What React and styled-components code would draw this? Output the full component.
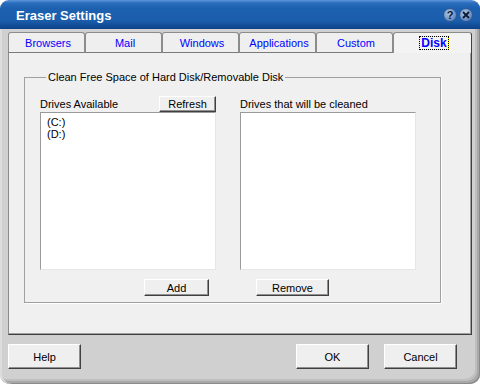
import React from "react";
import styled, { createGlobalStyle } from "styled-components";

const GlobalStyle = createGlobalStyle`
  html, body {
    margin: 0;
    padding: 0;
    background: #ffffff;
  }
  body {
    font-family: "Liberation Sans", Arial, sans-serif;
    font-size: 11px;
    color: #000;
  }
`;

const tabs = ["Browsers", "Mail", "Windows", "Applications", "Custom", "Disk"];

const App = () => {
  return (
    <>
      <GlobalStyle />
      <Window>
        <TitleBar>
          <Title>Eraser Settings</Title>
          <CaptionButtons>
            <CaptionButton>?</CaptionButton>
            <CaptionButton>
              <svg width="8" height="8" viewBox="0 0 8 8">
                <path d="M1 1 L7 7 M7 1 L1 7" stroke="#0b1a33" strokeWidth="1.8" />
              </svg>
            </CaptionButton>
          </CaptionButtons>
        </TitleBar>
        <Body>
          <TabStrip>
            {tabs.map((t) => (
              <Tab key={t} $active={t === "Disk"}>
                {t === "Disk" ? <Focus>{t}</Focus> : t}
              </Tab>
            ))}
          </TabStrip>
          <Panel>
            <Group>
              <Legend>Clean Free Space of Hard Disk/Removable Disk</Legend>
              <Columns>
                <Column>
                  <Header>
                    <span>Drives Available</span>
                    <Button $w={57} $h={16}>Refresh</Button>
                  </Header>
                  <ListBox>
                    <Item>(C:)</Item>
                    <Item>(D:)</Item>
                  </ListBox>
                  <ButtonRow $offset={104}>
                    <Button $w={65} $h={17}>Add</Button>
                  </ButtonRow>
                </Column>
                <Column>
                  <Header>
                    <span>Drives that will be cleaned</span>
                  </Header>
                  <ListBox />
                  <ButtonRow $offset={16}>
                    <Button $w={73} $h={17}>Remove</Button>
                  </ButtonRow>
                </Column>
              </Columns>
            </Group>
          </Panel>
          <Footer>
            <Button $w={73} $h={25}>Help</Button>
            <Spacer />
            <Button $w={73} $h={25}>OK</Button>
            <Button $w={73} $h={25}>Cancel</Button>
          </Footer>
        </Body>
      </Window>
    </>
  );
};

const Window = styled.div`
  width: 480px;
  height: 384px;
  box-sizing: border-box;
  display: flex;
  flex-direction: column;
  background: #d0d0d0;
  border-radius: 9px 9px 10px 10px;
  overflow: hidden;
  box-shadow: inset 2px 0 0 #dcdcdc, inset -1px -1px 0 #8a8a8a,
    inset -3px -3px 0 #a8a8a8, inset -5px -5px 0 #bfbfbf;
`;

const TitleBar = styled.div`
  height: 29px;
  flex: none;
  display: flex;
  align-items: center;
  padding: 0 7px 0 16px;
  background: linear-gradient(
    to bottom,
    #5d97dc 0px,
    #2c6dbd 3px,
    #1c61b0 8px,
    #1a5dab 21px,
    #134f9a 25px,
    #0c4389 29px
  );
`;

const Title = styled.div`
  color: #fff;
  font-weight: bold;
  font-size: 13px;
  padding-top: 1px;
`;

const CaptionButtons = styled.div`
  margin-left: auto;
  display: flex;
  gap: 2px;
  padding-top: 1px;
`;

const CaptionButton = styled.div`
  width: 14px;
  height: 14px;
  border-radius: 50%;
  box-sizing: border-box;
  border: 1px solid #2d5a96;
  background: radial-gradient(circle at 40% 35%, #b2c9e6 0%, #7496c7 55%, #4a72ac 100%);
  color: #0b1a33;
  font-weight: bold;
  font-size: 11px;
  display: flex;
  align-items: center;
  justify-content: center;
`;

const Body = styled.div`
  flex: 1;
  display: flex;
  flex-direction: column;
  padding: 3px 8px 0 8px;
`;

const TabStrip = styled.div`
  display: flex;
  height: 20px;
`;

const Tab = styled.div`
  width: ${(p) => (p.$active ? 79 : 77)}px;
  box-sizing: border-box;
  height: 21px;
  display: flex;
  align-items: center;
  justify-content: center;
  padding-left: 3px;
  background: ${(p) => (p.$active ? "#f3f3f3" : "#efefef")};
  border: 1px solid #8c8c8c;
  border-right-color: ${(p) => (p.$active ? "#404040" : "#8c8c8c")};
  border-bottom: ${(p) => (p.$active ? "none" : "1px solid #7a7a7a")};
  border-radius: 3px 3px 0 0;
  color: #0000ff;
  font-weight: ${(p) => (p.$active ? "bold" : "normal")};
  font-size: ${(p) => (p.$active ? "12px" : "11px")};
  position: relative;
  z-index: ${(p) => (p.$active ? 1 : 0)};
`;

const Focus = styled.span`
  border: 1px solid #ffff00;
  outline: 1px dotted #000;
  outline-offset: -1px;
  padding: 0 1px;
  line-height: 12px;
`;

const Panel = styled.div`
  width: 464px;
  height: 283px;
  box-sizing: border-box;
  background: #f0f0f0;
  border-left: 1px solid #8c8c8c;
  border-right: 1px solid #404040;
  border-bottom: 1px solid #404040;
  box-shadow: inset -1px -1px 0 #a0a0a0;
  padding: 19px 0 0 15px;
`;

const Group = styled.fieldset`
  margin: 0;
  width: 417px;
  height: 232px;
  box-sizing: border-box;
  border: 1px solid #a0a0a0;
  box-shadow: 1px 1px 0 #fff;
  padding: 11px 23px 0 15px;
  min-inline-size: 0;
`;

const Legend = styled.legend`
  padding: 0 2px;
  margin-left: 6px;
  line-height: 13px;
`;

const Columns = styled.div`
  display: grid;
  grid-template-columns: 176px 176px;
  column-gap: 24px;
`;

const Column = styled.div`
  display: flex;
  flex-direction: column;
`;

const Header = styled.div`
  height: 17px;
  display: flex;
  align-items: center;
  justify-content: space-between;
`;

const ListBox = styled.div`
  height: 158px;
  box-sizing: border-box;
  background: #fff;
  border: 1px solid;
  border-color: #9a9a9a #e6e6e6 #e6e6e6 #9a9a9a;
  padding: 3px 6px;
`;

const Item = styled.div`
  line-height: 12px;
`;

const ButtonRow = styled.div`
  display: flex;
  padding: 9px 0 0 ${(p) => p.$offset}px;
`;

const Button = styled.div`
  width: ${(p) => p.$w}px;
  height: ${(p) => p.$h}px;
  box-sizing: border-box;
  display: flex;
  align-items: center;
  justify-content: center;
  background: #efefef;
  border: 1px solid;
  border-color: #ffffff #404040 #404040 #ffffff;
  box-shadow: inset -1px -1px 0 #909090;
  font-size: 11px;
  padding-top: 1px;
`;

const Footer = styled.div`
  display: flex;
  gap: 15px;
  padding-top: 9px;
  padding-right: 15px;
`;

const Spacer = styled.div`
  flex: 1;
`;

export default App;
